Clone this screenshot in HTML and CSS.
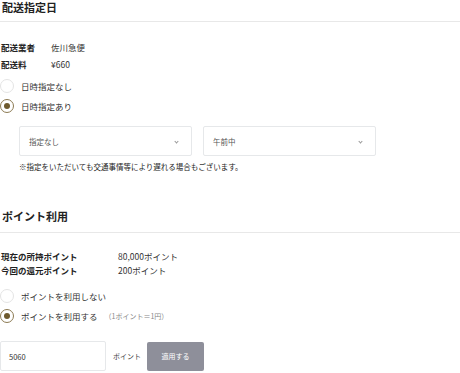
FILE: index.html
```html
<!DOCTYPE html>
<html lang="ja">
<head>
    <meta charset="UTF-8">
    <title>配送指定日</title>
    <link rel="stylesheet" href="styles.css">
</head>
<body>
    <section class="block">
        <h2 class="block-title">配送指定日</h2>
        <dl class="info">
            <div class="info-row"><dt>配送業者</dt><dd>佐川急便</dd></div>
            <div class="info-row"><dt>配送料</dt><dd>¥660</dd></div>
        </dl>
        <div class="radio"><span class="dot"></span>日時指定なし</div>
        <div class="radio checked"><span class="dot"></span>日時指定あり</div>
        <div class="selects">
            <div class="select">指定なし<span class="chev"></span></div>
            <div class="select">午前中<span class="chev"></span></div>
        </div>
        <p class="note">※指定をいただいても交通事情等により遅れる場合もございます。</p>
    </section>

    <section class="block points">
        <h2 class="block-title">ポイント利用</h2>
        <dl class="info wide">
            <div class="info-row"><dt>現在の所持ポイント</dt><dd>80,000ポイント</dd></div>
            <div class="info-row"><dt>今回の還元ポイント</dt><dd>200ポイント</dd></div>
        </dl>
        <div class="radio"><span class="dot"></span>ポイントを利用しない</div>
        <div class="radio checked"><span class="dot"></span>ポイントを利用する<span class="rate">（1ポイント＝1円）</span></div>
        <div class="use">
            <div class="input">5060</div>
            <span class="unit">ポイント</span>
            <button class="apply">適用する</button>
        </div>
    </section>
</body>
</html>
```

FILE: styles.css
```css
* {
    box-sizing: border-box;
    margin: 0;
    padding: 0;
}

body {
    font-family: "Noto Sans CJK JP", "Noto Sans", sans-serif;
    background-color: #fff;
    color: #222;
    width: 460px;
    height: 373px;
    overflow: hidden;
}

.block-title {
    font-size: 11px;
    font-weight: bold;
    line-height: 14px;
    padding: 0 0 0 2px;
    height: 22px;
    border-bottom: 1px solid #e8e8e8;
}

.info {
    margin-top: 17px;
    font-size: 8.5px;
    line-height: 17px;
}

.info-row {
    display: flex;
}

.info dt {
    font-weight: bold;
    width: 51px;
    padding-left: 1px;
}

.info.wide dt {
    width: 118px;
}

.info dd {
    color: #333;
}

.radio {
    display: flex;
    align-items: center;
    height: 20px;
    font-size: 8.5px;
    color: #333;
}

.info + .radio {
    margin-top: 3px;
}

.dot {
    width: 14px;
    height: 14px;
    border-radius: 50%;
    border: 1px solid #e4e4e4;
    margin-right: 7px;
    position: relative;
}

.radio.checked .dot {
    border-color: #8c7a52;
}

.radio.checked .dot::after {
    content: "";
    position: absolute;
    left: 3px;
    top: 3px;
    width: 6px;
    height: 6px;
    border-radius: 50%;
    background-color: #6e5a2e;
}

.selects {
    display: flex;
    gap: 11px;
    margin: 10px 0 0 19px;
}

.select {
    width: 173px;
    height: 30px;
    border: 1px solid #e6e8ea;
    border-radius: 2px;
    font-size: 7.5px;
    color: #555;
    display: flex;
    align-items: center;
    justify-content: space-between;
    padding: 0 13px 0 9px;
}

.chev {
    width: 3px;
    height: 3px;
    border-right: 1px solid #999;
    border-bottom: 1px solid #999;
    transform: rotate(45deg);
}

.note {
    font-size: 7.5px;
    margin: 5px 0 0 19px;
    color: #222;
}

.points {
    margin-top: 37px;
}

.points .block-title {
    height: 24px;
}

.points .info {
    margin-top: 16px;
    line-height: 14px;
}

.points .info + .radio {
    margin-top: 9px;
}

.rate {
    font-size: 7px;
    color: #888;
    margin-left: 7px;
}

.use {
    display: flex;
    align-items: center;
    margin-top: 15px;
}

.input {
    width: 106px;
    height: 30px;
    border: 1px solid #e6e8ea;
    border-radius: 2px;
    font-size: 7.5px;
    color: #333;
    display: flex;
    align-items: center;
    padding-left: 8px;
}

.unit {
    font-size: 7px;
    color: #444;
    margin: 0 6px 0 7px;
}

.apply {
    width: 57px;
    height: 29px;
    border: none;
    border-radius: 2px;
    background-color: #8e8f9a;
    color: #fff;
    font-family: inherit;
    font-size: 7px;
}
```
